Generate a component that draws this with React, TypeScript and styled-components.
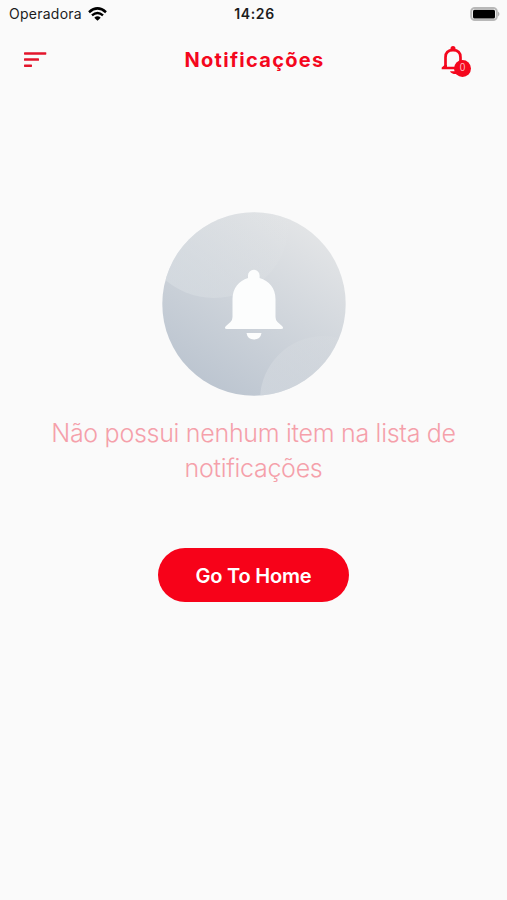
import React from "react";
import styled, { createGlobalStyle } from "styled-components";

const GlobalStyle = createGlobalStyle`
  * { box-sizing: border-box; }
  body {
    margin: 0;
    background: #fafafa;
    font-family: Inter, "Liberation Sans", sans-serif;
  }
`;

const Screen = styled.main`
  display: flex;
  flex-direction: column;
  height: 900px;
  overflow: hidden;
  background: #fafafa;
`;

const StatusBar = styled.div`
  display: grid;
  grid-template-columns: 1fr auto 1fr;
  align-items: center;
  height: 28px;
  padding: 0 6px 1px 9px;
  color: #1c1c1c;
`;

const Carrier = styled.div`
  display: flex;
  align-items: center;
  gap: 6px;
  font-size: 14px;
  letter-spacing: 0.25px;
`;

const Clock = styled.time`
  padding-right: 1px;
  font-size: 14px;
  font-weight: 600;
  letter-spacing: 0.6px;
`;

const Battery = styled.svg`
  display: block;
  justify-self: end;
`;

const Header = styled.header`
  display: grid;
  grid-template-columns: 1fr auto 1fr;
  align-items: center;
  height: 64px;
  padding: 0 36px 0 24px;
`;

const Title = styled.h1`
  margin: 0;
  padding-left: 14px;
  color: #f4071d;
  font-size: 20px;
  font-weight: 650;
  line-height: 24px;
  letter-spacing: 1.3px;
`;

const IconButton = styled.button<{ $end?: boolean }>`
  position: relative;
  display: block;
  padding: 0;
  border: 0;
  background: none;
  justify-self: ${(p) => (p.$end ? "end" : "start")};

  svg { display: block; }
`;

const Badge = styled.span`
  position: absolute;
  left: 13px;
  top: 16px;
  width: 17px;
  height: 17px;
  border-radius: 50%;
  background: #f4071d;
  color: #ffb9bf;
  font-size: 10px;
  line-height: 15px;
  text-align: center;
`;

const EmptyState = styled.section`
  display: flex;
  flex-direction: column;
  align-items: center;
  padding-top: 120px;
`;

const Illustration = styled.svg`
  display: block;
`;

const Message = styled.p`
  width: 420px;
  margin: 20px 0 0;
  color: #f5a0aa;
  font-size: 25px;
  font-weight: 300;
  line-height: 35px;
  letter-spacing: -0.29px;
  text-align: center;
`;

const HomeButton = styled.button`
  width: 191px;
  height: 54px;
  margin-top: 62px;
  padding: 1px 0 0;
  border: 0;
  border-radius: 27px;
  background: #f70219;
  color: #fff;
  font-family: inherit;
  font-size: 20px;
  font-weight: 600;
  letter-spacing: -0.2px;
`;

const WifiIcon = () => (
  <svg width="19" height="14" viewBox="0 0 19 14">
    <path d="M1 5.2Q9.500-2.400 18 5.200" fill="none" stroke="#000" strokeWidth="2.500" />
    <path d="M4 8.300Q9.500 3.500 15 8.300" fill="none" stroke="#000" strokeWidth="2.400" />
    <path d="M6.300 10.700Q9.500 7.900 12.700 10.700L9.500 13.700Z" fill="#000" />
  </svg>
);

const MenuIcon = () => (
  <svg width="23" height="16" viewBox="0 0 23 16" fill="#e3152b">
    <rect width="22.300" height="2.500" y="0.200" rx="0.600" />
    <rect width="15" height="2.500" y="6.300" rx="0.600" />
    <rect width="8" height="2.500" y="12.400" rx="0.600" />
  </svg>
);

const BellIcon = () => (
  <svg width="30" height="32" viewBox="0 0 30 32">
    <path
      d="M4.500 23V13.500Q4.500 6.200 12 6.200T19.500 13.500V23"
      fill="none"
      stroke="#f4071d"
      strokeWidth="2.700"
    />
    <path d="M9.500 5.700V4.400A2.500 2.500 0 0 1 14.500 4.400V5.700Z" fill="#f4071d" />
    <path d="M0.700 25.200V23.500L3.700 21H6V22.800H14V25.200ZM9 27.200H15V30Q10 30 9 27.200Z" fill="#f4071d" />
  </svg>
);

export default function App() {
  return (
    <>
      <GlobalStyle />
      <Screen>
        <StatusBar>
          <Carrier>
            <span>Operadora</span>
            <WifiIcon />
          </Carrier>
          <Clock>14:26</Clock>
          <Battery width="31" height="14" viewBox="0 0 31 14">
            <rect x="1.200" y="1" width="25.600" height="12" rx="3.600" fill="#fafafa" stroke="#b8b8b8" strokeWidth="2" />
            <rect x="3" y="2.800" width="22" height="8.600" rx="1.500" fill="#000" />
            <path d="M28 4.500Q31 7 28 9.500Z" fill="#b0b0b0" />
          </Battery>
        </StatusBar>
        <Header>
          <IconButton aria-label="Menu">
            <MenuIcon />
          </IconButton>
          <Title>Notificações</Title>
          <IconButton $end aria-label="Notificações">
            <BellIcon />
            <Badge>0</Badge>
          </IconButton>
        </Header>
        <EmptyState>
          <Illustration width="184" height="184" viewBox="0 0 184 184">
            <defs>
              <linearGradient id="disc" x1="0.25" y1="0.95" x2="0.8" y2="0.1">
                <stop offset="0" stopColor="#bcc5d0" />
                <stop offset="1" stopColor="#e2e4e6" />
              </linearGradient>
              <linearGradient id="upperWave" x1="0.1" y1="0.8" x2="0.95" y2="0.5">
                <stop offset="0" stopColor="#d9dfe4" stopOpacity="0.6" />
                <stop offset="1" stopColor="#e2e5e7" stopOpacity="0.15" />
              </linearGradient>
              <linearGradient id="lowerWave" x1="0" y1="0.6" x2="0.6" y2="0">
                <stop offset="0" stopColor="#d8dde3" stopOpacity="0.6" />
                <stop offset="1" stopColor="#e0e3e6" stopOpacity="0.1" />
              </linearGradient>
              <clipPath id="round">
                <circle cx="92" cy="92" r="91.7" />
              </clipPath>
            </defs>
            <g clipPath="url(#round)">
              <rect width="184" height="184" fill="url(#disc)" />
              <circle cx="52" cy="11" r="75" fill="url(#upperWave)" />
              <circle cx="162" cy="188" r="64" fill="url(#lowerWave)" />
            </g>
            <path
              fill="#fcfdfd"
              d="M86 66V63.500A5.800 5.800 0 0 1 97.600 63.500V66C107 69 113.500 76 113.500 87V105Q113.500 108 115.500 110L120 114Q122.500 116.800 119 117H65Q61.500 116.800 64 114L68.500 110Q70.500 108 70.500 105V87C70.500 76 77 69 86 66ZM84.500 121H99.500Q98.500 127.500 92 127.500T84.500 121Z"
            />
          </Illustration>
          <Message>Não possui nenhum item na lista de notificações</Message>
          <HomeButton>Go To Home</HomeButton>
        </EmptyState>
      </Screen>
    </>
  );
}
